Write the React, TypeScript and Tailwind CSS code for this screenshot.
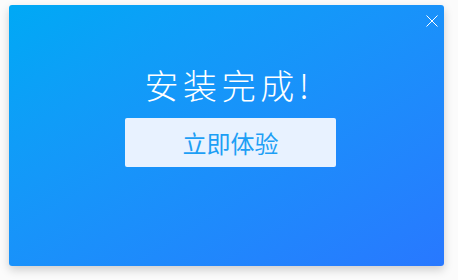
import React from "react";

export default function App() {
  return (
    <div className="w-[458px] h-[280px] bg-[#fbfbfb] pt-[5px] pl-[9px]" style={{ fontFamily: '"Noto Sans CJK SC", "Noto Sans", sans-serif' }}>
      <div className="relative w-[435px] h-[261px] rounded-[3px] bg-linear-to-br from-[#00a9f5] to-[#2878ff] shadow-[0_4px_10px_rgba(0,0,0,0.18)] flex flex-col items-center">
        <button className="absolute top-[10px] right-[6px] w-[12px] h-[12px] flex items-center justify-center">
          <svg width="12" height="12" viewBox="0 0 12 12" fill="none" stroke="white" strokeWidth="1">
            <path d="M0.5 0.5 L11.5 11.5 M11.5 0.5 L0.5 11.5" />
          </svg>
        </button>
        <h1 className="mt-[58px] ml-[5px] text-[34px] leading-[44px] font-extralight text-white tracking-[4.6px]">安装完成!</h1>
        <button className="mt-[11px] ml-[8px] w-[211px] h-[49px] rounded-[2px] bg-[#e8f2ff] text-[#1d9ff5] text-[24px] leading-[49px]">
          立即体验
        </button>
      </div>
    </div>
  );
}
